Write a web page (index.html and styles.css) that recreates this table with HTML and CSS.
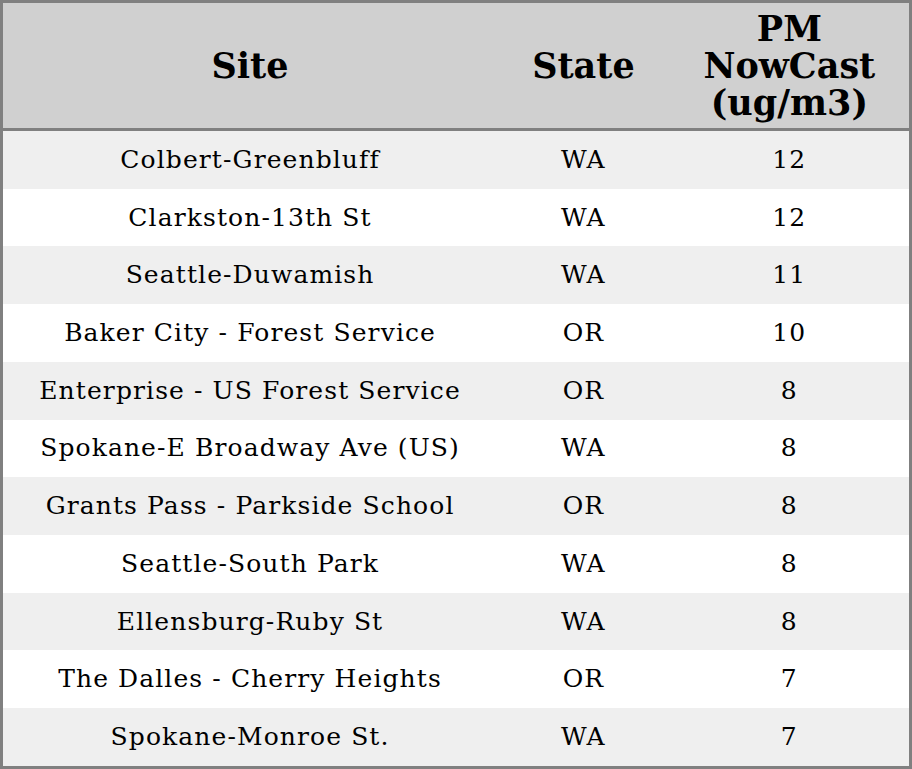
FILE: index.html
```html
<!DOCTYPE html>
<html>
<head>
<meta charset="utf-8">
<link rel="stylesheet" href="styles.css">
</head>
<body>
<table class="data">
  <colgroup>
    <col class="c-site">
    <col class="c-state">
    <col class="c-pm">
  </colgroup>
  <thead>
    <tr><th>Site</th><th>State</th><th>PM<br>NowCast<br>(ug/m3)</th></tr>
  </thead>
  <tbody>
    <tr><td>Colbert-Greenbluff</td><td>WA</td><td>12</td></tr>
    <tr><td>Clarkston-13th St</td><td>WA</td><td>12</td></tr>
    <tr><td>Seattle-Duwamish</td><td>WA</td><td>11</td></tr>
    <tr><td>Baker City - Forest Service</td><td>OR</td><td>10</td></tr>
    <tr><td>Enterprise - US Forest Service</td><td>OR</td><td>8</td></tr>
    <tr><td>Spokane-E Broadway Ave (US)</td><td>WA</td><td>8</td></tr>
    <tr><td>Grants Pass - Parkside School</td><td>OR</td><td>8</td></tr>
    <tr><td>Seattle-South Park</td><td>WA</td><td>8</td></tr>
    <tr><td>Ellensburg-Ruby St</td><td>WA</td><td>8</td></tr>
    <tr><td>The Dalles - Cherry Heights</td><td>OR</td><td>7</td></tr>
    <tr><td>Spokane-Monroe St.</td><td>WA</td><td>7</td></tr>
  </tbody>
</table>
</body>
</html>
```
FILE: styles.css
```css
html, body {
  margin: 0;
  padding: 0;
  background: #ffffff;
}
.data {
  width: 912px;
  height: 769px;
  border-collapse: collapse;
  table-layout: fixed;
  border: 3px solid #808080;
  font-family: "DejaVu Serif", serif;
  color: #000;
}
.c-site { width: 494px; }
.c-state { width: 172px; }
.c-pm { width: 240px; }
.data th {
  background: #d0d0d0;
  font-size: 35px;
  line-height: 37px;
  font-weight: bold;
  height: 125px;
  padding: 0;
  text-align: center;
  vertical-align: middle;
  border-bottom: 3px solid #808080;
}
.data td {
  font-size: 25px;
  letter-spacing: 1.1px;
  line-height: 28px;
  padding: 0;
  height: 57.7px;
  text-align: center;
  vertical-align: middle;
}
.data tbody tr:nth-child(odd) td {
  background: #efefef;
}
```
